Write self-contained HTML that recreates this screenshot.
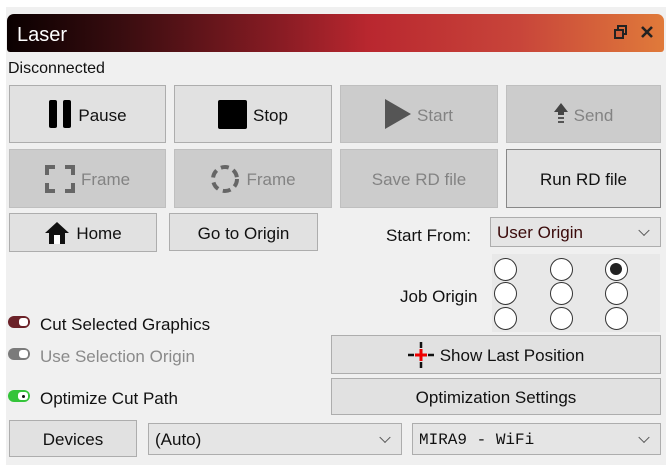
<!DOCTYPE html>
<html><head><style>
*{box-sizing:border-box;margin:0;padding:0}
body{width:672px;height:473px;background:#fff;font-family:"Liberation Sans",sans-serif;font-size:17px;color:#111;position:relative;overflow:hidden}
.panel{position:absolute;left:6px;top:7px;width:660px;height:458px;background:#f0f0f0}
.title{position:absolute;left:7px;top:14px;width:657px;height:38px;border-radius:7px 7px 3px 3px;background:linear-gradient(90deg,#0a0000 0%,#3a0d10 18%,#8a1c24 42%,#b9272f 55%,#c8453a 78%,#e07a3a 100%);color:#fff;font-size:20px;padding:10px 0 0 10px}
.b{position:absolute;border:1px solid #adadad;background:#e1e1e1;display:flex;align-items:center;justify-content:center;gap:6px;font-size:17px;padding-top:3px}
.b svg{margin-top:-3px}
.d{background:#cccccc;border-color:#bfbfbf;color:#838383}
.t{position:absolute;white-space:nowrap}
.combo{position:absolute;border:1px solid #adadad;background:#e5e5e5;padding-left:6px;padding-top:2px;display:flex;align-items:center;font-size:17px}
.combo:after{content:"";position:absolute;right:12px;top:50%;width:7px;height:7px;border-right:1.3px solid #555;border-bottom:1.3px solid #555;transform:translateY(-70%) rotate(45deg)}
.r{position:absolute;width:23px;height:23px;border:1.3px solid #333;border-radius:50%;background:#fff}
.tg{position:absolute;width:22px;height:12px;border-radius:6px}
.tg i{position:absolute;right:2px;top:2px;width:9px;height:8px;border-radius:3px;background:#fff}
</style></head><body>
<div class="panel"></div>
<div class="title">Laser
<svg style="position:absolute;right:36px;top:11px" width="14" height="14" viewBox="0 0 14 14"><rect x="4" y="1" width="8" height="8" fill="none" stroke="#222" stroke-width="2"/><rect x="1" y="5" width="8" height="8" fill="#d06038" stroke="#222" stroke-width="2"/></svg>
<svg style="position:absolute;right:10px;top:11px" width="14" height="14" viewBox="0 0 14 14"><path d="M2 2L12 12M12 2L2 12" stroke="#222" stroke-width="2.6"/></svg>
</div>
<div class="t" style="left:8px;top:60px;font-size:16px">Disconnected</div>

<div class="b" style="left:9px;top:85px;width:157px;height:58px"><svg width="24" height="30"><rect x="1" y="1" width="8" height="28" rx="2"/><rect x="15" y="1" width="8" height="28" rx="2"/></svg>Pause</div>
<div class="b" style="left:174px;top:85px;width:158px;height:58px"><svg width="29" height="29"><rect x="0" y="0" width="29" height="29" rx="2"/></svg>Stop</div>
<div class="b d" style="left:340px;top:85px;width:158px;height:58px"><svg width="26" height="30"><path d="M0 0L26 15L0 30Z" fill="#555"/></svg>Start</div>
<div class="b d" style="left:506px;top:85px;width:155px;height:58px"><svg width="14" height="22"><path d="M7 0L14 9H10V12H4V9H0Z" fill="#444"/><rect x="4" y="14" width="6" height="2" fill="#555"/><rect x="4" y="18" width="6" height="2" fill="#555"/></svg>Send</div>

<div class="b d" style="left:9px;top:149px;width:157px;height:59px"><svg width="30" height="28" fill="none" stroke="#666" stroke-width="4"><path d="M2 10V2H10M20 2H28V10M28 18V26H20M10 26H2V18"/></svg>Frame</div>
<div class="b d" style="left:174px;top:149px;width:158px;height:59px"><svg width="30" height="30" fill="none" stroke="#666" stroke-width="4"><circle cx="15" cy="15" r="12" stroke-dasharray="8 5"/></svg>Frame</div>
<div class="b d" style="left:340px;top:149px;width:158px;height:59px">Save RD file</div>
<div class="b" style="left:506px;top:149px;width:155px;height:59px;border-color:#888">Run RD file</div>

<div class="b" style="left:9px;top:213px;width:148px;height:39px"><svg width="26" height="24"><path d="M13 1L25 12H21V23H5V12H1Z" fill="#111"/><rect x="10" y="14" width="6" height="9" fill="#fff"/></svg>Home</div>
<div class="b" style="left:169px;top:213px;width:149px;height:38px">Go to Origin</div>
<div class="t" style="left:386px;top:226px">Start From:</div>
<div class="combo" style="left:490px;top:217px;width:171px;height:30px;color:#3a0a0a">User Origin</div>

<div style="position:absolute;left:492px;top:254px;width:168px;height:78px;background:#e8e8e8"></div>
<div class="t" style="left:400px;top:287px">Job Origin</div>
<div class="r" style="left:494px;top:258px"></div><div class="r" style="left:550px;top:258px"></div><div class="r" style="left:605px;top:258px"><div style="position:absolute;left:4px;top:4px;width:12px;height:12px;border-radius:50%;background:#222"></div></div>
<div class="r" style="left:494px;top:282px"></div><div class="r" style="left:550px;top:282px"></div><div class="r" style="left:605px;top:282px"></div>
<div class="r" style="left:494px;top:307px"></div><div class="r" style="left:550px;top:307px"></div><div class="r" style="left:605px;top:307px"></div>

<div class="tg" style="left:8px;top:316px;background:#6b2228"><i></i></div>
<div class="t" style="left:40px;top:315px">Cut Selected Graphics</div>
<div class="tg" style="left:8px;top:348px;background:#7b7b7b"><i></i></div>
<div class="t" style="left:40px;top:347px;color:#8a8a8a">Use Selection Origin</div>
<div class="tg" style="left:8px;top:390px;background:#34c43a"><i style="background:#fff;width:10px"><b style="position:absolute;left:4px;top:3px;width:3px;height:3px;background:#111;border-radius:50%"></b></i></div>
<div class="t" style="left:40px;top:389px">Optimize Cut Path</div>

<div class="b" style="left:331px;top:335px;width:330px;height:39px"><svg width="26" height="26"><path d="M13 0V6M13 20V26M0 13H6M20 13H26" stroke="#111" stroke-width="2.5"/><path d="M13 7V19M7 13H19" stroke="#e00" stroke-width="3"/></svg>Show Last Position</div>
<div class="b" style="left:331px;top:378px;width:330px;height:37px">Optimization Settings</div>

<div class="b" style="left:9px;top:420px;width:128px;height:37px">Devices</div>
<div class="combo" style="left:148px;top:423px;width:254px;height:32px">(Auto)</div>
<div class="combo" style="left:412px;top:423px;width:249px;height:32px;font-family:'Liberation Mono',monospace;font-size:16px">MIRA9 - WiFi</div>
</body></html>
